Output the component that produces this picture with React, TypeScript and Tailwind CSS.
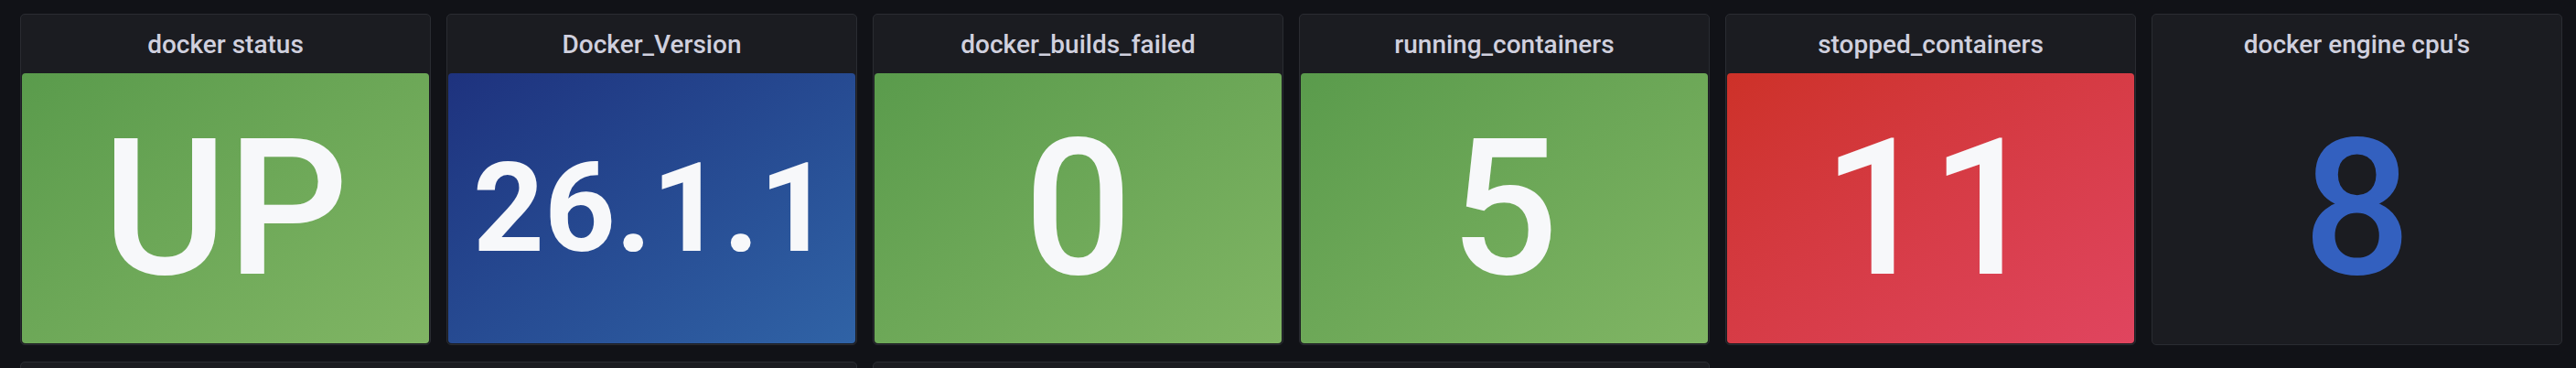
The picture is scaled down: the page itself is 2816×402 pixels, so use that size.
import React from "react";

type Stat = {
  title: string;
  value: string;
  bg?: string;
  valueClass: string;
};

const stats: Stat[] = [
  {
    title: "docker status",
    value: "UP",
    bg: "bg-gradient-to-br from-[#5a9b4c] to-[#80b564]",
    valueClass: "text-[208px] font-medium text-[#f7f8fa]",
  },
  {
    title: "Docker_Version",
    value: "26.1.1",
    bg: "bg-gradient-to-br from-[#1e327e] to-[#3063a6]",
    valueClass: "text-[136px] font-bold text-[#f7f8fa]",
  },
  {
    title: "docker_builds_failed",
    value: "0",
    bg: "bg-gradient-to-br from-[#5a9b4c] to-[#80b564]",
    valueClass: "text-[208px] font-medium text-[#f7f8fa]",
  },
  {
    title: "running_containers",
    value: "5",
    bg: "bg-gradient-to-br from-[#5a9b4c] to-[#80b564]",
    valueClass: "text-[208px] font-medium text-[#f7f8fa]",
  },
  {
    title: "stopped_containers",
    value: "11",
    bg: "bg-gradient-to-br from-[#cd3128] to-[#e0455f]",
    valueClass: "text-[208px] font-medium text-[#f7f8fa]",
  },
  {
    title: "docker engine cpu's",
    value: "8",
    valueClass: "text-[208px] font-medium text-[#3360bf]",
  },
];

const StatPanel: React.FC<{ stat: Stat }> = ({ stat }) => (
  <div className="flex flex-col rounded-[5px] border border-[#2a2c32] bg-[#1b1c21] p-px">
    <div className="flex h-[63px] shrink-0 items-center justify-center text-[28px] font-medium text-[#d0d0de]">
      {stat.title}
    </div>
    <div
      className={`flex flex-1 items-center justify-center rounded-[4px] ${stat.bg ?? ""}`}
    >
      <span className={`leading-none ${stat.valueClass}`}>{stat.value}</span>
    </div>
  </div>
);

export default function App() {
  return (
    <div
      className="h-[402px] overflow-hidden bg-[#111217] pl-[22px] pr-[15px] pt-[15px]"
      style={{ fontFamily: "Roboto, 'Noto Sans', sans-serif" }}
    >
      <div className="grid grid-cols-6 gap-x-[17px] gap-y-[18px]">
        {stats.map((s) => (
          <div key={s.title} className="flex h-[362px] flex-col [&>div]:flex-1">
            <StatPanel stat={s} />
          </div>
        ))}
        <div className="col-span-2 h-[200px] rounded-[5px] border border-[#2a2c32] bg-[#1b1c21]" />
        <div className="col-span-2 h-[200px] rounded-[5px] border border-[#2a2c32] bg-[#1b1c21]" />
      </div>
    </div>
  );
}
